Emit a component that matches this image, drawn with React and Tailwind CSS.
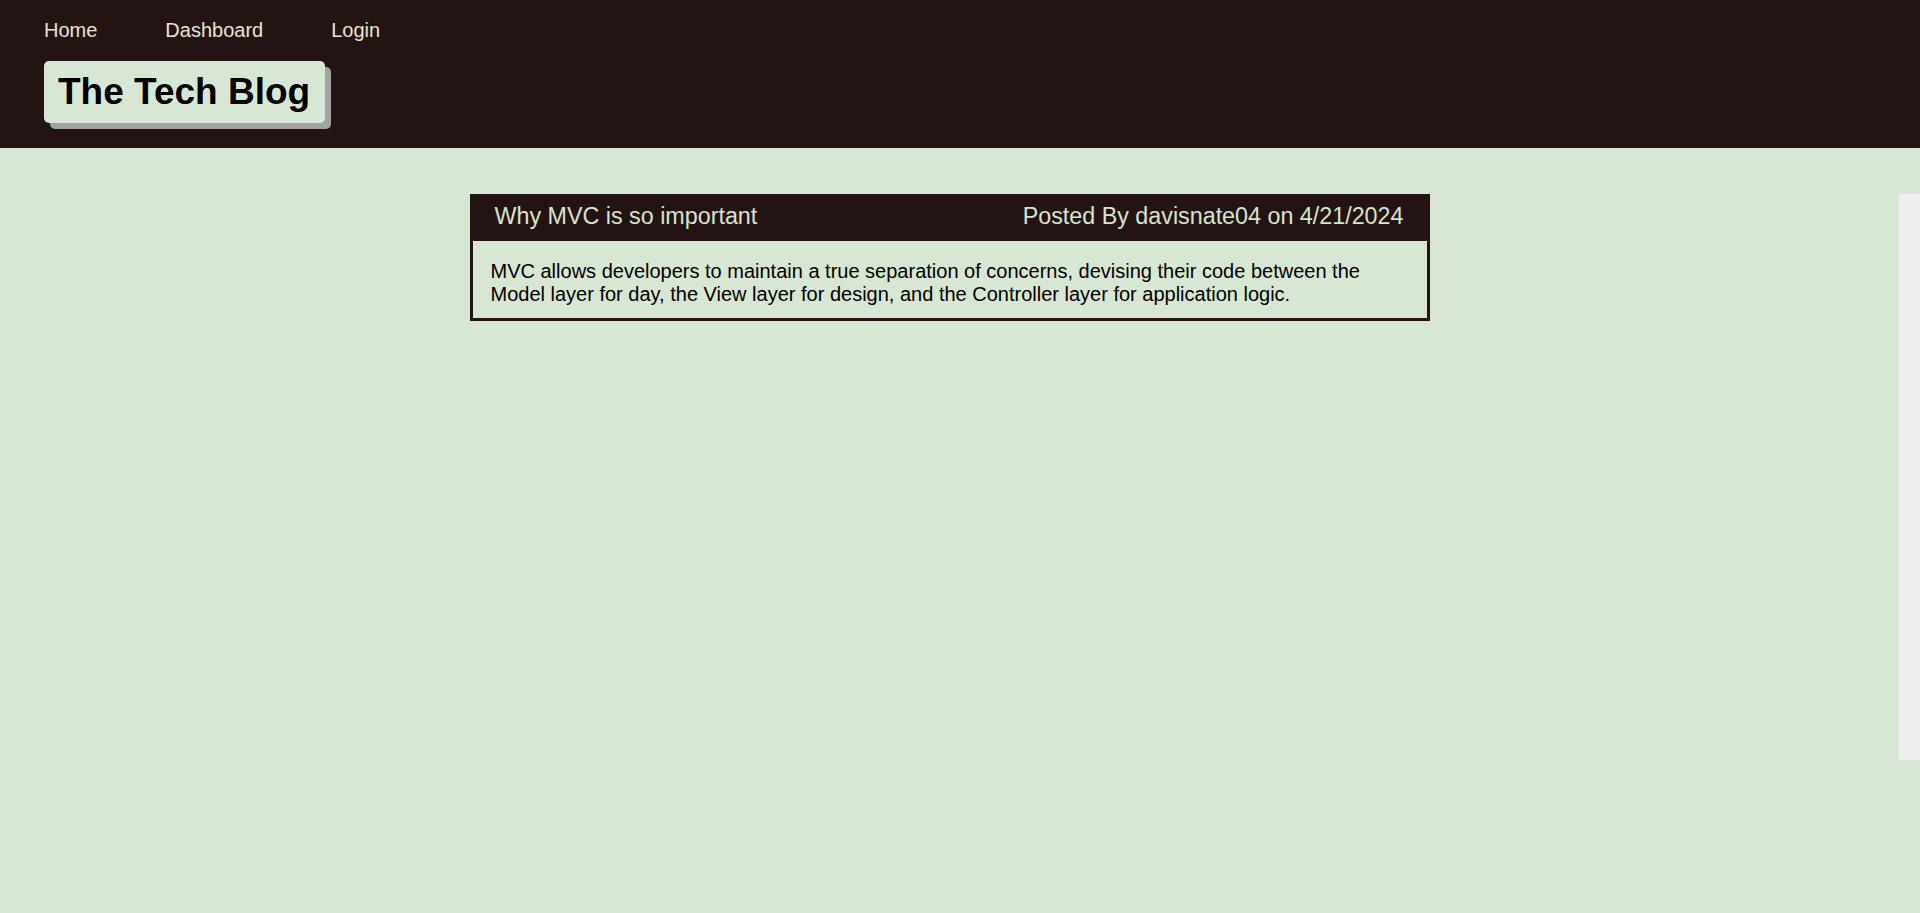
import React from 'react';

const posts = [
  {
    id: 1,
    title: 'Why MVC is so important',
    author: 'davisnate04',
    date: '4/21/2024',
    body: 'MVC allows developers to maintain a true separation of concerns, devising their code between the Model layer for day, the View layer for design, and the Controller layer for application logic.',
  },
];

const Header = () => {
  return (
    <header className="bg-[#231312] pl-[44px] pt-[19px] pb-[25px]">
      <nav className="flex gap-[68px] text-[20px] leading-[23px] text-[#e8e4d2]">
        <a href="#">Home</a>
        <a href="#">Dashboard</a>
        <a href="#">Login</a>
      </nav>
      <div className="mt-[19px] flex">
        <h1 className="h-[62px] flex items-center pl-[14px] pr-[15px] bg-[#d8e7d3] rounded-[5px] shadow-[6px_6px_0_#a3a3a1] text-[37px] leading-[42px] font-bold text-black">
          The Tech Blog
        </h1>
      </div>
    </header>
  );
};

const PostCard = ({ post }) => {
  return (
    <article className="w-[960px] border-[3px] border-[#231312]">
      <div className="flex justify-between bg-[#231312] pl-[22px] pr-[23px] pt-[6px] pb-[12px] text-[23.3px] leading-[26px] text-[#d8e4cf]">
        <span>{post.title}</span>
        <span>Posted By {post.author} on {post.date}</span>
      </div>
      <p className="pl-[18px] pr-[16px] pt-[19px] pb-[12px] text-[20px] leading-[23px] text-black">{post.body}</p>
    </article>
  );
};

const App = () => {
  return (
    <div className="min-h-screen bg-[#d8e7d3] font-['Liberation_Sans',Arial,sans-serif]">
      <Header />
      <main className="flex pt-[46px]">
        <div className="flex-1 flex justify-center items-start">
          {posts.map((post) => (
            <PostCard key={post.id} post={post} />
          ))}
        </div>
        <aside className="w-[21px] h-[566px] bg-[#efefef]"></aside>
      </main>
    </div>
  );
};

export default App;
